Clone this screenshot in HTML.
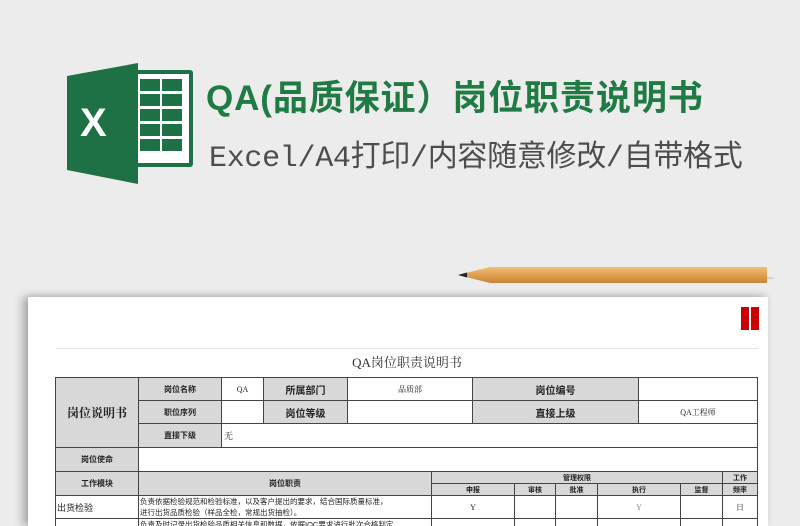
<!DOCTYPE html>
<html style="overflow:hidden;width:800px;height:526px"><head><meta charset="utf-8"><style>
*{margin:0;padding:0;box-sizing:border-box}
body{width:800px;height:526px;background:#ececec;position:relative;overflow:hidden;font-family:"Liberation Sans","Noto Sans CJK SC",sans-serif}
.a{position:absolute}
.t1{left:206px;top:70px;font-size:35px;font-weight:bold;color:#1f7a43;white-space:nowrap;letter-spacing:0.9px}
.t2{left:209px;top:131px;font-size:30px;color:#4d4d4d;white-space:nowrap;font-family:"Liberation Mono","Noto Sans CJK SC",monospace;letter-spacing:-0.3px}
.paper{left:28px;top:297px;width:740px;height:229px;background:#fff;box-shadow:-6px 0 8px rgba(0,0,0,.25),0 -2px 6px rgba(0,0,0,.1)}
.c{position:absolute;border:1px solid #444;display:flex;align-items:center;justify-content:center;font-size:8px;color:#222;font-family:"Liberation Serif","Noto Serif CJK SC",serif;margin-left:-1px;margin-top:-1px}
.g{background:#d8d8d8;font-weight:bold;font-family:"Liberation Sans","Noto Sans CJK SC",sans-serif}
.clip{position:absolute;left:0;top:0;width:800px;height:526px;overflow:hidden}
</style></head><body><div class="clip">
<svg class="a" style="left:60px;top:55px" width="140" height="130" viewBox="60 55 140 130">
<rect x="132" y="70" width="61" height="97" rx="3" fill="#1e7145"/>
<rect x="136" y="74" width="53" height="89" fill="#fff"/>
<g fill="#1e7145">
<rect x="140" y="79" width="20" height="12"/><rect x="162" y="79" width="20" height="12"/>
<rect x="140" y="94" width="20" height="12"/><rect x="162" y="94" width="20" height="12"/>
<rect x="140" y="109" width="20" height="12"/><rect x="162" y="109" width="20" height="12"/>
<rect x="140" y="124" width="20" height="12"/><rect x="162" y="124" width="20" height="12"/>
<rect x="140" y="139" width="20" height="12"/><rect x="162" y="139" width="20" height="12"/>
</g>
<path d="M67 76 L138 63 L138 184 L67 170 Z" fill="#1e7145"/>
<text x="80" y="136" font-family="Liberation Sans" font-weight="bold" font-size="40" fill="#fff">X</text>
</svg>
<div class="a t1">QA(品质保证）岗位职责说明书</div>
<div class="a t2">Excel/A4打印/内容随意修改/自带格式</div>
<svg class="a" style="left:455px;top:258px" width="320" height="30">
<defs><linearGradient id="p" x1="0" y1="0" x2="0" y2="1"><stop offset="0" stop-color="#f0c078"/><stop offset=".5" stop-color="#e0a050"/><stop offset="1" stop-color="#c8843a"/></linearGradient></defs>
<ellipse cx="170" cy="20" rx="150" ry="4" fill="rgba(0,0,0,.12)"/>
<path d="M3 17 L35 9 L312 9 L312 25 L35 25 Z" fill="url(#p)"/>
<path d="M3 17 L12 14.5 L12 19.5 Z" fill="#222"/>
</svg>
<div class="a paper"></div>
<div class="a" style="left:741px;top:307px;width:8px;height:23px;background:#c00"></div>
<div class="a" style="left:751px;top:307px;width:8px;height:23px;background:#c00"></div>
<div class="a" style="left:56px;top:348px;width:702px;height:1px;background:#e4e4e4"></div>
<div class="a" style="left:56px;top:352px;width:702px;text-align:center;font-size:13px;color:#333;font-family:'Liberation Serif','Noto Serif CJK SC',serif">QA岗位职责说明书</div>

<div class="c g" style="left:56px;top:378px;width:84px;height:71px;font-size:12px;font-family:'Liberation Serif','Noto Serif CJK SC',serif">岗位说明书</div>
<div class="c g" style="left:139px;top:378px;width:84px;height:24px">岗位名称</div>
<div class="c" style="left:222px;top:378px;width:43px;height:24px">QA</div>
<div class="c g" style="left:264px;top:378px;width:85px;height:24px;font-size:10px">所属部门</div>
<div class="c" style="left:348px;top:378px;width:126px;height:24px">品质部</div>
<div class="c g" style="left:473px;top:378px;width:167px;height:24px;font-size:10px">岗位编号</div>
<div class="c" style="left:639px;top:378px;width:120px;height:24px"></div>
<div class="c g" style="left:139px;top:401px;width:84px;height:24px">职位序列</div>
<div class="c" style="left:222px;top:401px;width:43px;height:24px"></div>
<div class="c g" style="left:264px;top:401px;width:85px;height:24px;font-size:10px">岗位等级</div>
<div class="c" style="left:348px;top:401px;width:126px;height:24px"></div>
<div class="c g" style="left:473px;top:401px;width:167px;height:24px;font-size:10px">直接上级</div>
<div class="c" style="left:639px;top:401px;width:120px;height:24px">QA工程师</div>
<div class="c g" style="left:139px;top:424px;width:84px;height:25px">直接下级</div>
<div class="c" style="left:222px;top:424px;width:537px;height:25px;justify-content:flex-start;padding-left:2px;font-size:9px">无</div>
<div class="c g" style="left:56px;top:448px;width:84px;height:25px">岗位使命</div>
<div class="c" style="left:139px;top:448px;width:620px;height:25px"></div>
<div class="c g" style="left:56px;top:472px;width:84px;height:25px">工作模块</div>
<div class="c g" style="left:139px;top:472px;width:294px;height:25px">岗位职责</div>
<div class="c g" style="left:432px;top:472px;width:292px;height:13px;font-size:7px">管理权限</div>
<div class="c g" style="left:723px;top:472px;width:36px;height:13px;font-size:7px">工作</div>
<div class="c g" style="left:432px;top:484px;width:84px;height:13px;font-size:7px">申报</div>
<div class="c g" style="left:515px;top:484px;width:42px;height:13px;font-size:7px">审核</div>
<div class="c g" style="left:556px;top:484px;width:43px;height:13px;font-size:7px">批准</div>
<div class="c g" style="left:598px;top:484px;width:84px;height:13px;font-size:7px">执行</div>
<div class="c g" style="left:681px;top:484px;width:43px;height:13px;font-size:7px">监督</div>
<div class="c g" style="left:723px;top:484px;width:36px;height:13px;font-size:7px">频率</div>
<div class="c" style="left:56px;top:496px;width:84px;height:24px;justify-content:flex-start;padding-left:1px;font-size:9px;font-family:'Liberation Sans','Noto Sans CJK SC',sans-serif">出货检验</div>
<div class="c" style="left:139px;top:496px;width:294px;height:24px;padding-left:1px;font-size:7.5px;line-height:11px;font-family:'Liberation Sans','Noto Sans CJK SC',sans-serif;overflow:hidden;white-space:nowrap;display:block">负责依据检验规范和检验标准，以及客户提出的要求，结合国际质量标准，<br>进行出货品质检验（样品全检，常规出货抽检）。</div>
<div class="c" style="left:432px;top:496px;width:84px;height:24px">Y</div>
<div class="c" style="left:515px;top:496px;width:42px;height:24px"></div>
<div class="c" style="left:556px;top:496px;width:43px;height:24px"></div>
<div class="c" style="left:598px;top:496px;width:84px;height:24px;color:#888">Y</div>
<div class="c" style="left:681px;top:496px;width:43px;height:24px"></div>
<div class="c" style="left:723px;top:496px;width:36px;height:24px">日</div>
<div class="c" style="left:56px;top:519px;width:84px;height:10px"></div>
<div class="c" style="left:139px;top:519px;width:294px;height:10px;display:block;font-size:7.5px;padding-left:1px;font-family:'Liberation Sans','Noto Sans CJK SC',sans-serif;white-space:nowrap;overflow:hidden">负责及时记录出货检验品质相关信息和数据，依据IQC要求进行批次合格判定</div>
<div class="c" style="left:432px;top:519px;width:84px;height:10px"></div>
<div class="c" style="left:515px;top:519px;width:42px;height:10px"></div>
<div class="c" style="left:556px;top:519px;width:43px;height:10px"></div>
<div class="c" style="left:598px;top:519px;width:84px;height:10px"></div>
<div class="c" style="left:681px;top:519px;width:43px;height:10px"></div>
<div class="c" style="left:723px;top:519px;width:36px;height:10px"></div>
</div></body></html>
